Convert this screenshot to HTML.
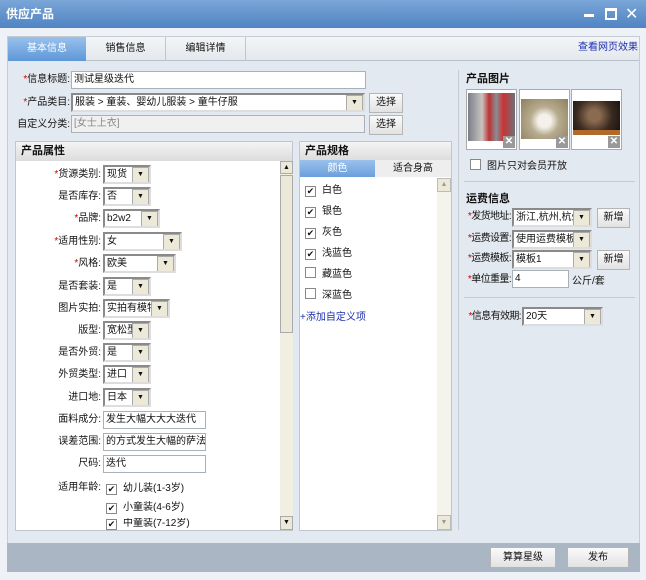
<!DOCTYPE html>
<html><head><meta charset="utf-8"><style>
*{margin:0;padding:0;box-sizing:border-box}
body{width:646px;height:580px;position:relative;overflow:hidden;background:#eef1f5;font-family:"Liberation Sans","Noto Sans CJK SC",sans-serif;font-size:10px;color:#111}
.a{position:absolute;white-space:nowrap}
.title{left:0;top:0;width:646px;height:28px;background:linear-gradient(#7aa6d8,#4f83c2);color:#fff;font-weight:bold;font-size:12px;line-height:28px;padding-left:6px}
.lbl{position:absolute;text-align:right;white-space:nowrap;font-size:10px;line-height:16px}
.rl{letter-spacing:-0.6px}
.r{color:#c00}
.inp{position:absolute;background:#fff;border:1px solid #a8b0b8;height:18px;line-height:16px;padding-left:2px;font-size:10px;white-space:nowrap;overflow:hidden}
.sel{position:absolute;background:#fff;border:2px solid #8a8a8a;border-right-color:#ddd;border-bottom-color:#ddd;height:19px;line-height:15px;padding-left:2px;padding-right:15px;white-space:nowrap;overflow:hidden}
.sel:after{content:"▼";position:absolute;right:0;top:0;width:15px;height:15px;background:#ece9d8;border:1px solid #aaa;font-size:7px;line-height:14px;text-align:center}
.btn{position:absolute;background:linear-gradient(#fafafa,#e2e2e2);border:1px solid #b5b5b5;text-align:center;line-height:18px;font-size:10px}
.cb{display:inline-block;width:11px;height:11px;border:1px solid #888;background:#fff;vertical-align:-1px;margin-right:6px;font-size:9px;line-height:9px;text-align:center}
.hd{background:linear-gradient(#f4f4f4,#dcdcdc);font-weight:bold;height:19px;line-height:19px;padding-left:5px;font-size:11px}
.img{position:absolute;border:1px solid #aaa;background:#fff;width:51px;height:61px}
.x{position:absolute;right:1px;bottom:1px;width:12px;height:12px;background:#999;color:#fff;font-size:10px;line-height:12px;text-align:center;font-weight:bold}
</style></head><body>
<div class="a title">供应产品</div>
<div class="a" style="left:584px;top:14px;width:10px;height:3px;background:#fff"></div>
<div class="a" style="left:605px;top:8px;width:12px;height:12px;border:2px solid #fff;border-top-width:3px"></div>
<div class="a" style="left:625px;top:4px;color:#fff;font-size:16px">✕</div>

<div class="a" style="left:7px;top:36px;width:633px;height:508px;background:#e3e9f0;border:1px solid #c5ccd4"></div>
<div class="a" style="left:8px;top:37px;width:631px;height:24px;background:linear-gradient(#f3f5f7,#e4e8ec);border-bottom:1px solid #b9c1ca"></div>
<div class="a" style="left:8px;top:37px;width:78px;height:24px;background:linear-gradient(#9ac1ec,#5d97d8);color:#fff;text-align:center;line-height:24px">基本信息</div>
<div class="a" style="left:86px;top:37px;width:80px;height:24px;border-right:1px solid #c5c5c5;text-align:center;line-height:24px">销售信息</div>
<div class="a" style="left:166px;top:37px;width:80px;height:24px;border-right:1px solid #c5c5c5;text-align:center;line-height:24px">编辑详情</div>
<div class="a" style="left:578px;top:40px;color:#1c2fb0;line-height:16px">查看网页效果</div>

<div class="lbl" style="right:576px;top:72px"><span class="r">*</span>信息标题:</div>
<div class="inp" style="left:71px;top:71px;width:295px">测试星级迭代</div>
<div class="lbl" style="right:576px;top:95px"><span class="r">*</span>产品类目:</div>
<div class="sel" style="left:71px;top:93px;width:294px">服装 &gt; 童装、婴幼儿服装 &gt; 童牛仔服</div>
<div class="btn" style="left:369px;top:93px;width:34px;height:20px">选择</div>
<div class="lbl" style="right:576px;top:117px">自定义分类:</div>
<div class="inp" style="left:71px;top:115px;width:294px;background:#f0f0f0;color:#888">[女士上衣]</div>
<div class="btn" style="left:369px;top:115px;width:34px;height:20px">选择</div>

<div class="a" style="left:15px;top:141px;width:278px;height:390px;background:#fff;border:1px solid #c0c6cc">
<div class="hd">产品属性</div></div>
<div class="a" style="left:280px;top:161px;width:13px;height:369px;background:#f1efe2"></div>
<div class="a" style="left:280px;top:161px;width:13px;height:13px;background:#ece9d8;border:1px solid #aaa;font-size:7px;text-align:center;line-height:11px">▲</div>
<div class="a" style="left:280px;top:175px;width:13px;height:158px;background:#ece9d8;border:1px solid #aaa"></div>
<div class="a" style="left:280px;top:516px;width:13px;height:14px;background:#ece9d8;border:1px solid #aaa;font-size:7px;text-align:center;line-height:12px">▼</div>

<div class="lbl" style="right:545px;top:167px"><span class="r">*</span>货源类别:</div><div class="sel" style="left:103px;top:165px;width:48px">现货</div>
<div class="lbl" style="right:545px;top:189px">是否库存:</div><div class="sel" style="left:103px;top:187px;width:48px">否</div>
<div class="lbl" style="right:545px;top:211px"><span class="r">*</span>品牌:</div><div class="sel" style="left:103px;top:209px;width:57px">b2w2</div>
<div class="lbl" style="right:545px;top:234px"><span class="r">*</span>适用性别:</div><div class="sel" style="left:103px;top:232px;width:79px">女</div>
<div class="lbl" style="right:545px;top:256px"><span class="r">*</span>风格:</div><div class="sel" style="left:103px;top:254px;width:73px">欧美</div>
<div class="lbl" style="right:545px;top:279px">是否套装:</div><div class="sel" style="left:103px;top:277px;width:48px">是</div>
<div class="lbl" style="right:545px;top:301px">图片实拍:</div><div class="sel" style="left:103px;top:299px;width:67px">实拍有模特</div>
<div class="lbl" style="right:545px;top:323px">版型:</div><div class="sel" style="left:103px;top:321px;width:48px">宽松型</div>
<div class="lbl" style="right:545px;top:345px">是否外贸:</div><div class="sel" style="left:103px;top:343px;width:48px">是</div>
<div class="lbl" style="right:545px;top:367px">外贸类型:</div><div class="sel" style="left:103px;top:365px;width:48px">进口</div>
<div class="lbl" style="right:545px;top:390px">进口地:</div><div class="sel" style="left:103px;top:388px;width:48px">日本</div>
<div class="lbl" style="right:545px;top:412px">面料成分:</div><div class="inp" style="left:103px;top:411px;width:103px">发生大幅大大大迭代</div>
<div class="lbl" style="right:545px;top:434px">误差范围:</div><div class="inp" style="left:103px;top:433px;width:103px">的方式发生大幅的萨法</div>
<div class="lbl" style="right:545px;top:456px">尺码:</div><div class="inp" style="left:103px;top:455px;width:103px">迭代</div>
<div class="lbl" style="right:545px;top:480px">适用年龄:</div>
<div class="a" style="left:106px;top:481px;line-height:16px"><span class="cb">✔</span>幼儿装(1-3岁)</div>
<div class="a" style="left:106px;top:500px;line-height:16px"><span class="cb">✔</span>小童装(4-6岁)</div>
<div class="a" style="left:106px;top:518px;line-height:12px;height:12px;overflow:hidden"><span class="cb">✔</span>中童装(7-12岁)</div>

<div class="a" style="left:299px;top:141px;width:153px;height:390px;background:#fff;border:1px solid #c0c6cc">
<div class="hd">产品规格</div></div>
<div class="a" style="left:300px;top:160px;width:75px;height:17px;background:linear-gradient(#9ac1ec,#6a9fdc);color:#fff;text-align:center;line-height:17px">颜色</div>
<div class="a" style="left:375px;top:160px;width:76px;height:17px;background:#eeeeee;text-align:center;line-height:17px">适合身高</div>
<div class="a" style="left:437px;top:178px;width:14px;height:352px;background:#f4f3ec"></div>
<div class="a" style="left:437px;top:178px;width:14px;height:14px;background:#ece9d8;border:1px solid #bbb;font-size:7px;color:#999;text-align:center;line-height:12px">▲</div>
<div class="a" style="left:437px;top:515px;width:14px;height:15px;background:#ece9d8;border:1px solid #bbb;font-size:7px;color:#999;text-align:center;line-height:13px">▼</div>
<div class="a" style="left:305px;top:180px;line-height:21px">
<div><span class="cb">✔</span>白色</div><div><span class="cb">✔</span>银色</div><div><span class="cb">✔</span>灰色</div><div><span class="cb">✔</span>浅蓝色</div><div><span class="cb"></span>藏蓝色</div><div><span class="cb"></span>深蓝色</div></div>
<div class="a" style="left:300px;top:308px;color:#1c2fb0">+添加自定义项</div>

<div class="a" style="left:458px;top:70px;width:1px;height:460px;background:#c6ccd3"></div>

<div class="a" style="left:466px;top:70px;font-weight:bold;font-size:11px">产品图片</div>
<div class="img" style="left:466px;top:89px"><div style="margin:3px 1px;height:48px;background:linear-gradient(90deg,#7a8088,#c9c3c0 30%,#b33 45%,#8a8d95 60%,#c33 75%,#6d6f78)"></div><div class="x">✕</div></div>
<div class="img" style="left:519px;top:89px"><div style="margin:9px 1px 0;height:40px;background:radial-gradient(circle at 50% 55%,#f4f0ea 20%,#b7ab8e 45%,#8d8060)"></div><div class="x">✕</div></div>
<div class="img" style="left:571px;top:89px"><div style="margin:11px 1px 0;height:34px;background:radial-gradient(circle at 45% 50%,#8a6a50 20%,#3a2a20 60%,#1a1410);border-bottom:5px solid #b06a2a"></div><div class="x">✕</div></div>
<div class="a" style="left:470px;top:157px"><span class="cb"></span>图片只对会员开放</div>
<div class="a" style="left:464px;top:181px;width:171px;height:1px;background:#c6ccd3"></div>
<div class="a" style="left:466px;top:190px;font-weight:bold;font-size:11px">运费信息</div>
<div class="lbl rl" style="right:135px;top:209px"><span class="r">*</span>发货地址:</div><div class="sel" style="left:512px;top:208px;width:80px">浙江,杭州,杭州</div><div class="btn" style="left:597px;top:208px;width:33px;height:20px">新增</div>
<div class="lbl rl" style="right:135px;top:231px"><span class="r">*</span>运费设置:</div><div class="sel" style="left:512px;top:230px;width:80px">使用运费模板</div>
<div class="lbl rl" style="right:135px;top:251px"><span class="r">*</span>运费模板:</div><div class="sel" style="left:512px;top:250px;width:80px">模板1</div><div class="btn" style="left:597px;top:250px;width:33px;height:20px">新增</div>
<div class="lbl rl" style="right:135px;top:272px"><span class="r">*</span>单位重量:</div><div class="inp" style="left:512px;top:270px;width:57px">4</div><div class="a" style="left:572px;top:272px">公斤/套</div>
<div class="a" style="left:464px;top:297px;width:171px;height:1px;background:#c6ccd3"></div>
<div class="lbl rl" style="right:125px;top:309px"><span class="r">*</span>信息有效期:</div><div class="sel" style="left:522px;top:307px;width:81px">20天</div>

<div class="a" style="left:7px;top:543px;width:633px;height:29px;background:#aab6c3"></div>
<div class="btn" style="left:490px;top:547px;width:66px;height:21px;line-height:19px">算算星级</div>
<div class="btn" style="left:567px;top:547px;width:62px;height:21px;line-height:19px">发布</div>
</body></html>
